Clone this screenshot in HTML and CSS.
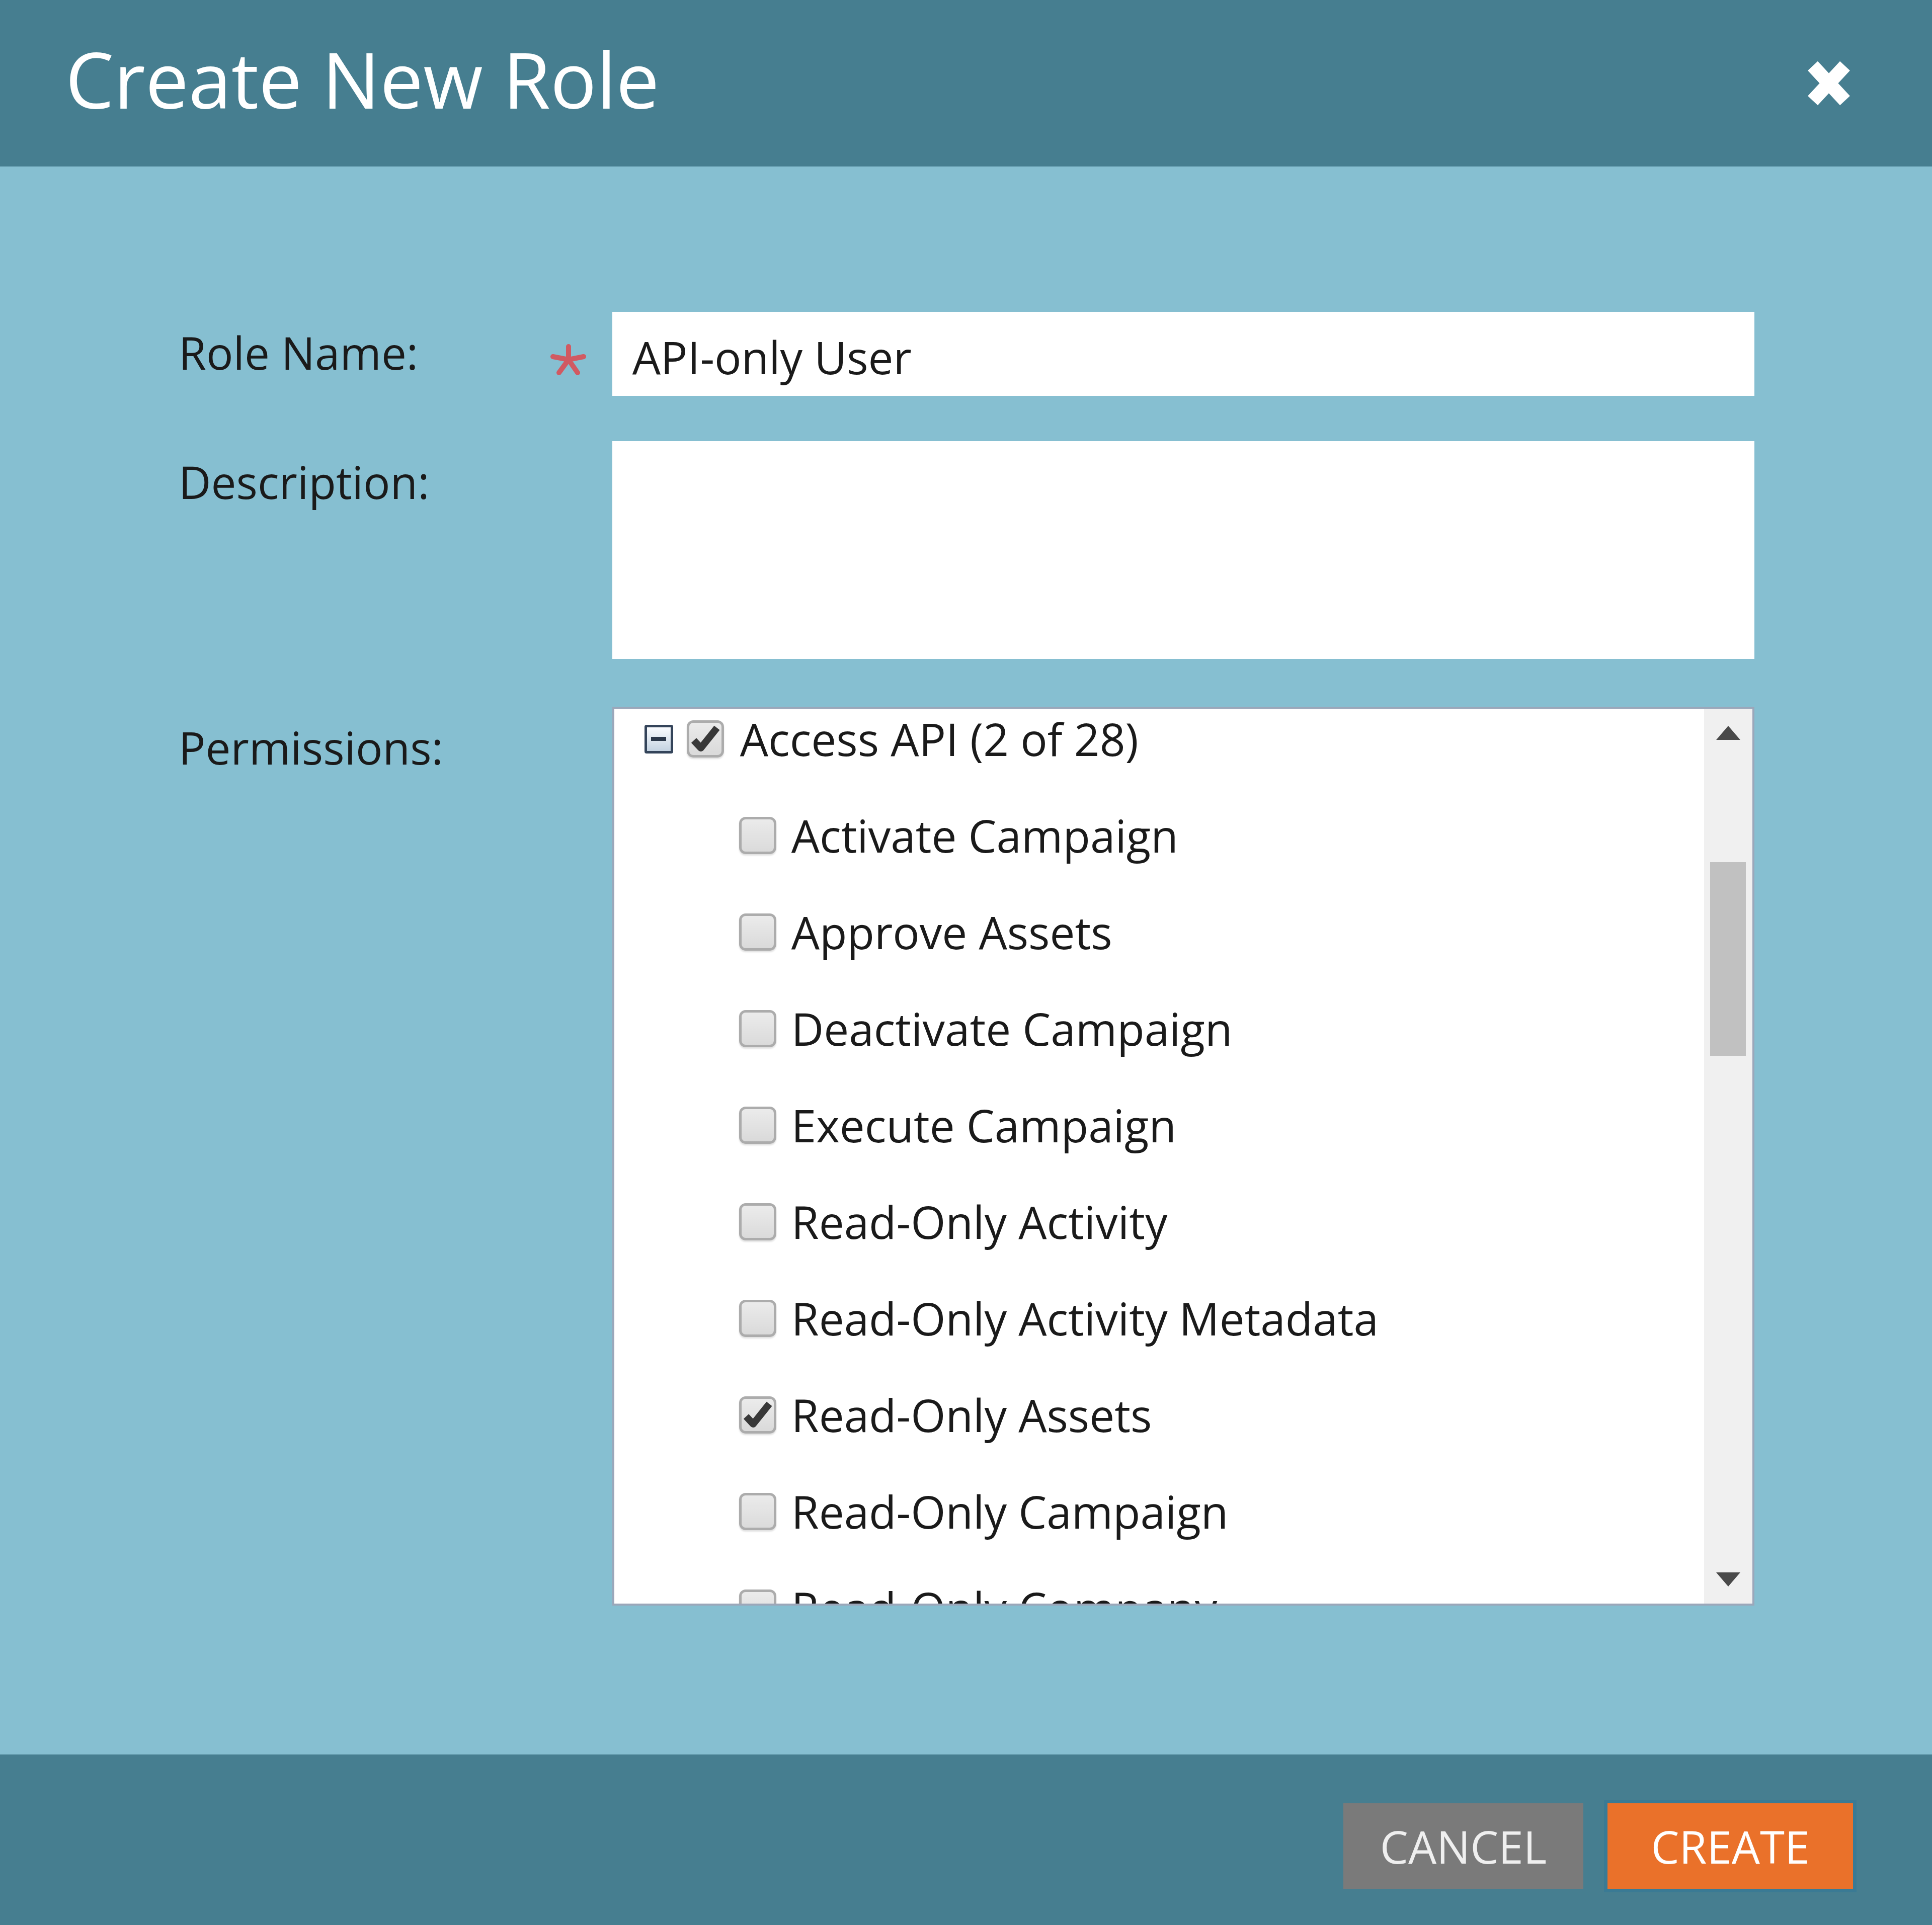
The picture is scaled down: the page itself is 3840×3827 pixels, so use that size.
FILE: index.html
```html
<!DOCTYPE html>
<html>
<head>
    <title>Create New Role</title>
    <link rel="stylesheet" href="styles.css">
</head>
<body>
    <div class="dialog">
        <header class="dialog-header">
            <h1>Create New Role</h1>
            <button class="close-btn" type="button" aria-label="Close">
                <svg width="90" height="95" viewBox="0 0 90 95">
                    <path d="M13 13 L77 82 M77 13 L13 82" stroke="#fff" stroke-width="27" fill="none"/>
                </svg>
            </button>
        </header>

        <main class="dialog-body">
            <div class="form-row row-name">
                <label class="field-label" for="roleName">Role Name:</label>
                <span class="required">
                    <svg width="72" height="64" viewBox="0 0 72 64">
                        <path d="M37 5 L37 31 M6 25 L37 31 L67 25 M18 57 L37 31 L55 57" stroke="#d15a62" stroke-width="10" stroke-linecap="round" stroke-linejoin="round" fill="none"/>
                    </svg>
                </span>
                <input class="text-input" id="roleName" type="text" value="API-only User">
            </div>

            <div class="form-row row-desc">
                <label class="field-label" for="roleDesc">Description:</label>
                <span class="required"></span>
                <textarea class="text-area" id="roleDesc"></textarea>
            </div>

            <div class="form-row row-perms">
                <label class="field-label">Permissions:</label>
                <span class="required"></span>
                <div class="perm-box">
                    <div class="perm-list">
                        <div class="perm-item perm-parent">
                            <span class="tree-toggle"><span class="tree-minus"></span></span>
                            <span class="check is-on"><svg width="64" height="64" viewBox="0 0 64 64"><path d="M9 35 L23 50 L55 10" stroke="#383838" stroke-width="14" fill="none" stroke-linejoin="round"/></svg></span>
                            <span class="perm-text">Access API (2 of 28)</span>
                        </div>
                        <div class="perm-item perm-child">
                            <span class="check"></span>
                            <span class="perm-text">Activate Campaign</span>
                        </div>
                        <div class="perm-item perm-child">
                            <span class="check"></span>
                            <span class="perm-text">Approve Assets</span>
                        </div>
                        <div class="perm-item perm-child">
                            <span class="check"></span>
                            <span class="perm-text">Deactivate Campaign</span>
                        </div>
                        <div class="perm-item perm-child">
                            <span class="check"></span>
                            <span class="perm-text">Execute Campaign</span>
                        </div>
                        <div class="perm-item perm-child">
                            <span class="check"></span>
                            <span class="perm-text">Read-Only Activity</span>
                        </div>
                        <div class="perm-item perm-child">
                            <span class="check"></span>
                            <span class="perm-text">Read-Only Activity Metadata</span>
                        </div>
                        <div class="perm-item perm-child">
                            <span class="check is-on"><svg width="64" height="64" viewBox="0 0 64 64"><path d="M9 35 L23 50 L55 10" stroke="#383838" stroke-width="14" fill="none" stroke-linejoin="round"/></svg></span>
                            <span class="perm-text">Read-Only Assets</span>
                        </div>
                        <div class="perm-item perm-child">
                            <span class="check"></span>
                            <span class="perm-text">Read-Only Campaign</span>
                        </div>
                        <div class="perm-item perm-child">
                            <span class="check"></span>
                            <span class="perm-text">Read-Only Company</span>
                        </div>
                    </div>
                    <div class="scrollbar">
                        <div class="scroll-arrow"><span class="arrow-up"></span></div>
                        <div class="scroll-thumb"></div>
                        <div class="scroll-arrow scroll-arrow-down"><span class="arrow-down"></span></div>
                    </div>
                </div>
            </div>
        </main>

        <footer class="dialog-footer">
            <button class="btn btn-cancel" type="button">CANCEL</button>
            <button class="btn btn-create" type="button">CREATE</button>
        </footer>
    </div>
</body>
</html>
```

FILE: styles.css
```css
* {
    margin: 0;
    padding: 0;
    box-sizing: border-box;
    font-family: "Open Sans", "Noto Sans", Arial, sans-serif;
}

body {
    background: #86bfd1;
}

.dialog {
    height: 3827px;
    display: flex;
    flex-direction: column;
}

/* header */
.dialog-header {
    height: 331px;
    background: #467e90;
    display: flex;
    align-items: center;
    justify-content: space-between;
    padding: 0 160px 0 130px;
}

.dialog-header h1 {
    color: #fff;
    font-size: 153px;
    font-weight: normal;
    line-height: 1;
    margin-top: -18px;
}

.close-btn {
    background: none;
    border: none;
    width: 90px;
    height: 95px;
    cursor: pointer;
}

.close-btn svg {
    display: block;
}

/* body / form */
.dialog-body {
    flex: 1;
    padding: 289px 353px 0 355px;
    color: #1a1a1a;
    font-size: 89px;
}

.form-row {
    display: flex;
}

.row-name {
    margin-bottom: 90px;
}

.row-desc {
    margin-bottom: 95px;
}

.field-label {
    width: 741px;
    padding-top: 21px;
    line-height: 120px;
    font-size: 89px;
}

.required {
    width: 121px;
}

.required svg {
    display: block;
    margin-top: 64px;
    margin-left: -3px;
}

.text-input {
    width: 2271px;
    height: 167px;
    border: none;
    background: #fff;
    padding: 12px 40px 0;
    font-size: 89px;
    color: #1a1a1a;
    outline: none;
}

.text-area {
    width: 2271px;
    height: 433px;
    border: none;
    background: #fff;
    resize: none;
    outline: none;
}

/* permissions tree */
.perm-box {
    width: 2271px;
    height: 1787px;
    border: 4px solid #9ba7ba;
    background: #fff;
    display: flex;
}

.perm-list {
    flex: 1;
    overflow: hidden;
}

.perm-item {
    display: flex;
    align-items: center;
    height: 120px;
    margin-bottom: 72px;
    line-height: 120px;
    white-space: nowrap;
}

.perm-parent {
    padding-left: 60px;
}

.perm-child {
    padding-left: 248px;
}

.tree-toggle {
    width: 57px;
    height: 57px;
    border: 5px solid #34445a;
    border-radius: 4px;
    background: linear-gradient(#fafcff, #c4d3e2);
    display: flex;
    align-items: center;
    justify-content: center;
    margin-right: 27px;
}

.tree-minus {
    width: 30px;
    height: 8px;
    background: #2b384a;
}

.check {
    width: 74px;
    height: 74px;
    border: 5px solid #acacac;
    border-radius: 13px;
    background: linear-gradient(#ebebeb, #dadada);
    box-shadow: 0 3px 3px rgba(0, 0, 0, 0.12);
    margin-right: 32px;
    flex-shrink: 0;
    display: flex;
    align-items: center;
    justify-content: center;
}

.perm-child .check {
    margin-right: 30px;
}

.check svg {
    display: block;
}

.perm-text {
    font-size: 89px;
    color: #1a1a1a;
}

/* fake scrollbar */
.scrollbar {
    width: 96px;
    background: #f0f0f0;
    display: flex;
    flex-direction: column;
}

.scroll-arrow {
    height: 96px;
    display: flex;
    align-items: center;
    justify-content: center;
}

.scroll-arrow-down {
    margin-top: auto;
}

.arrow-up {
    width: 0;
    height: 0;
    border-left: 24px solid transparent;
    border-right: 24px solid transparent;
    border-bottom: 28px solid #4a4a4a;
}

.arrow-down {
    width: 0;
    height: 0;
    border-left: 24px solid transparent;
    border-right: 24px solid transparent;
    border-top: 28px solid #4a4a4a;
}

.scroll-thumb {
    margin: 209px 0 0 12px;
    width: 71px;
    height: 385px;
    background: #c1c1c1;
}

/* footer */
.dialog-footer {
    height: 339px;
    background: #467e90;
    display: flex;
    justify-content: flex-end;
    align-items: center;
    gap: 48px;
    padding: 25px 157px 0 0;
}

.btn {
    height: 170px;
    border: none;
    font-size: 89px;
    cursor: pointer;
}

.btn-cancel {
    width: 477px;
    background: #7a7a7a;
    color: #efefef;
}

.btn-create {
    width: 488px;
    background: #ea712a;
    color: #fff;
    box-shadow: 0 0 0 7px #3a7a94;
}
```
